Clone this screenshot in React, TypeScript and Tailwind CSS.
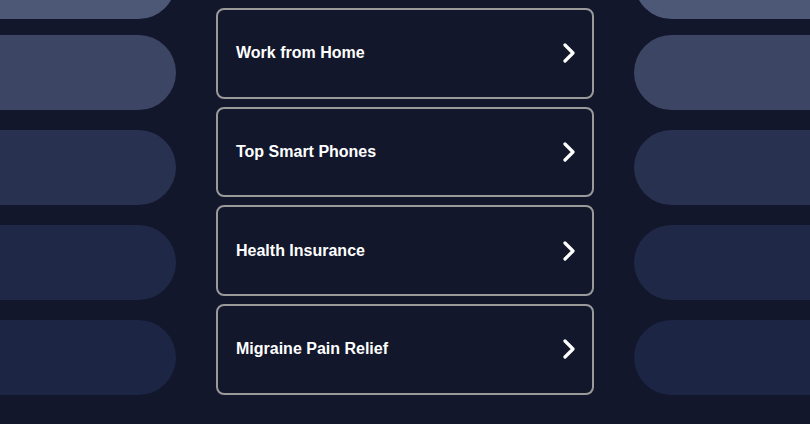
const leftPills = [
  { color: "bg-[#4d5776]", mt: "mt-[-56px]" },
  { color: "bg-[#3c4664]", mt: "mt-[16px]" },
  { color: "bg-[#283150]", mt: "mt-[20px]" },
  { color: "bg-[#1f2846]", mt: "mt-[20px]" },
  { color: "bg-[#1c2544]", mt: "mt-[20px]" },
];

const links = [
  "",
  "Work from Home",
  "Top Smart Phones",
  "Health Insurance",
  "Migraine Pain Relief",
];

function Chevron() {
  return (
    <svg width="14" height="20" viewBox="0 0 14 20" fill="none">
      <polyline
        points="3,2 11,10 3,18"
        stroke="white"
        strokeWidth="3.2"
        strokeLinecap="round"
        strokeLinejoin="round"
      />
    </svg>
  );
}

function PillColumn({ side }: { side: "left" | "right" }) {
  return (
    <div className="flex flex-col">
      {leftPills.map((pill, i) => (
        <div
          key={i}
          className={`h-[75px] w-full shrink-0 ${pill.color} ${pill.mt} ${
            side === "left" ? "rounded-r-full" : "rounded-l-full"
          }`}
        ></div>
      ))}
    </div>
  );
}

function App() {
  return (
    <div
      className="w-[810px] h-[424px] overflow-hidden bg-[#12172b] flex gap-[40px]"
      style={{ fontFamily: '"Liberation Sans", Arial, sans-serif' }}
    >
      <div className="w-[176px] shrink-0">
        <PillColumn side="left" />
      </div>
      <div className="w-[378px] shrink-0 flex flex-col gap-[8px] mt-[-90.67px]">
        {links.map((label, i) => (
          <a
            key={i}
            href="#"
            className="h-[90.67px] shrink-0 border-2 border-[#9a9a9a] rounded-[8px] bg-[#12172b] flex items-center justify-between pl-[18px] pr-[16px]"
          >
            {label && (
              <>
                <span className="text-white font-bold text-[16px]">{label}</span>
                <Chevron />
              </>
            )}
          </a>
        ))}
      </div>
      <div className="flex-1 min-w-[200px]">
        <PillColumn side="right" />
      </div>
    </div>
  );
}

export default App;
